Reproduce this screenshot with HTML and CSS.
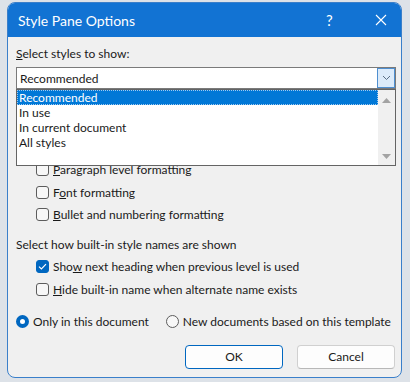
FILE: index.html
```html
<!DOCTYPE html>
<html>
<head>
<meta charset="utf-8">
<link rel="stylesheet" href="styles.css">
</head>
<body>
<div class="desk">
  <div class="win">
    <div class="titlebar">
      <span class="title">Style Pane Options</span>
      <span class="help">?</span>
      <svg class="close" width="12" height="12" viewBox="0 0 12 12"><path d="M1 1 L11 11 M11 1 L1 11" stroke="#fff" stroke-width="1.1" fill="none"/></svg>
    </div>
    <div class="content">
      <div class="label l1"><u>S</u>elect styles to show:</div>
      <div class="combo-wrap">
        <div class="combo">
          <span class="combo-text">Recommended</span>
          <span class="drop-btn"><svg width="9" height="6" viewBox="0 0 9 6"><path d="M1 1 L4.5 4.5 L8 1" stroke="#5a6e84" stroke-width="1" fill="none"/></svg></span>
        </div>
        <div class="listbox">
          <div class="items">
            <div class="item sel">Recommended</div>
            <div class="item">In use</div>
            <div class="item">In current document</div>
            <div class="item">All styles</div>
          </div>
          <div class="scroll">
            <svg width="9" height="5" viewBox="0 0 9 5"><path d="M0 5 L4.5 0 L9 5 Z" fill="#a3a3a3"/></svg>
            <svg width="9" height="5" viewBox="0 0 9 5"><path d="M0 0 L4.5 5 L9 0 Z" fill="#a3a3a3"/></svg>
          </div>
        </div>
      </div>
      <div class="covered"></div>
      <div class="checks g1">
        <div class="check"><span class="box"></span><span><u>P</u>aragraph level formatting</span></div>
        <div class="check"><span class="box"></span><span>F<u>o</u>nt formatting</span></div>
        <div class="check"><span class="box"></span><span><u>B</u>ullet and numbering formatting</span></div>
      </div>
      <div class="label l4">Select how built-in style names are shown</div>
      <div class="checks g2">
        <div class="check"><span class="box on"><svg width="9" height="7" viewBox="0 0 9 7"><path d="M1 3.6 L3.4 6 L8 1.2" stroke="#fff" stroke-width="1.2" fill="none"/></svg></span><span>Sho<u>w</u> next heading when previous level is used</span></div>
        <div class="check"><span class="box"></span><span><u>H</u>ide built-in name when alternate name exists</span></div>
      </div>
      <div class="radios">
        <div class="radio"><span class="dot on"></span><span>Only in this document</span></div>
        <div class="radio r2"><span class="dot"></span><span>New documents based on this template</span></div>
      </div>
      <div class="buttons">
        <button class="btn ok">OK</button>
        <button class="btn">Cancel</button>
      </div>
    </div>
  </div>
</div>
</body>
</html>
```
FILE: styles.css
```css
html, body {
  margin: 0;
  padding: 0;
}
body {
  width: 410px;
  height: 382px;
  background: #dde2e8;
  font-family: "Lato", "Liberation Sans", sans-serif;
  font-size: 12px;
  color: #1a1a1a;
  overflow: hidden;
}
.desk {
  padding: 2px 0 0 7px;
}
.win {
  width: 395px;
  height: 376px;
  box-sizing: border-box;
  border: 1px solid #3a7fca;
  border-radius: 8px;
  background: #f0f0f0;
  overflow: hidden;
  display: flex;
  flex-direction: column;
}
.titlebar {
  height: 34px;
  background: #1273d3;
  color: #fff;
  display: flex;
  align-items: center;
  position: relative;
  flex: none;
}
.title {
  font-family: "Lato", sans-serif;
  font-size: 14px;
  margin-left: 10px;
}
.help {
  position: absolute;
  left: 318px;
  top: 8px;
  font-family: "Lato", sans-serif;
  font-size: 15px;
}
.close {
  position: absolute;
  left: 367px;
  top: 11px;
}
.content {
  padding: 0 5px 0 8px;
  display: flex;
  flex-direction: column;
}
.label {
  height: 16px;
  line-height: 16px;
  white-space: nowrap;
}
.l1 { margin-top: 9px; }
.combo-wrap {
  position: relative;
  margin-top: 5px;
}
.combo {
  height: 22px;
  box-sizing: border-box;
  border: 1px solid #7a7a7a;
  background: #fff;
  display: flex;
  align-items: center;
  position: relative;
}
.combo-text {
  margin-left: 3px;
}
.drop-btn {
  position: absolute;
  right: 0;
  top: 0;
  width: 18px;
  height: 20px;
  box-sizing: border-box;
  border: 1px solid #4f8fd0;
  background: #dcebfa;
  display: flex;
  align-items: center;
  justify-content: center;
}
.listbox {
  position: absolute;
  left: 0;
  right: 0;
  top: 22px;
  height: 77px;
  box-sizing: border-box;
  border: 1px solid #646464;
  background: #fff;
  display: flex;
  z-index: 2;
}
.items {
  flex: 1;
  display: flex;
  flex-direction: column;
}
.item {
  height: 15px;
  line-height: 15px;
  padding-left: 2px;
  box-sizing: border-box;
  white-space: nowrap;
}
.item.sel {
  background: #0078d7;
  color: #fff;
  outline: 1px dotted #9fcaf0;
  outline-offset: -1px;
}
.scroll {
  width: 17px;
  background: #f0f0f0;
  display: flex;
  flex-direction: column;
  justify-content: space-between;
  align-items: center;
  padding: 8px 0 6px;
  box-sizing: border-box;
}
.covered {
  height: 65px;
}
.checks {
  display: flex;
  flex-direction: column;
  padding-left: 20px;
}
.g1 { margin-top: 4.5px; }
.g1 .check { height: 22.5px; }
.check {
  display: flex;
  align-items: center;
  height: 23px;
  white-space: nowrap;
}
.box {
  width: 13px;
  height: 13px;
  box-sizing: border-box;
  border: 1px solid #5c5c5c;
  border-radius: 3px;
  background: #f7f7f7;
  margin-right: 4px;
  display: flex;
  align-items: center;
  justify-content: center;
  flex: none;
}
.box.on {
  background: #0067c0;
  border-color: #0067c0;
}
.l4 { margin-top: 11px; }
.g2 { margin-top: 2px; }
.radios {
  display: flex;
  align-items: center;
  height: 22px;
  margin-top: 9.5px;
  white-space: nowrap;
}
.radio {
  display: flex;
  align-items: center;
}
.r2 { margin-left: 17px; }
.dot {
  width: 13px;
  height: 13px;
  box-sizing: border-box;
  border: 1px solid #5c5c5c;
  border-radius: 50%;
  background: #f7f7f7;
  margin-right: 4px;
  flex: none;
}
.dot.on {
  border: 4px solid #0067c0;
  background: #fff;
}
.buttons {
  display: flex;
  justify-content: flex-end;
  gap: 14px;
  margin-top: 12px;
  padding-right: 1px;
}
.btn {
  width: 98px;
  height: 24px;
  box-sizing: border-box;
  border: 1px solid #d0d0d0;
  border-bottom-color: #b8b8b8;
  border-radius: 4px;
  background: #fdfdfd;
  font-family: inherit;
  font-size: 12px;
  color: #1a1a1a;
  padding: 0;
}
.btn.ok {
  border: 1px solid #0067c0;
}
```
